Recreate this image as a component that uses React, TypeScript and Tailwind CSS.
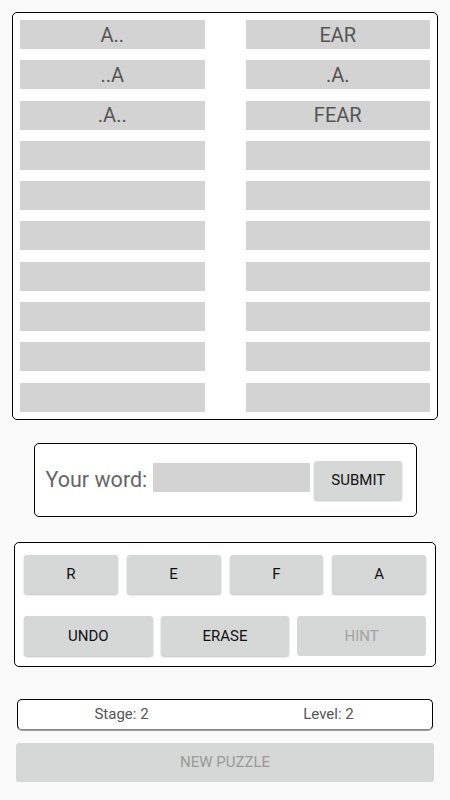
import React from "react";

const LEFT = ["A..", "..A", ".A..", "", "", "", "", "", "", ""];
const RIGHT = ["EAR", ".A.", "FEAR", "", "", "", "", "", "", ""];
const LETTERS = ["R", "E", "F", "A"];

const btn =
  "flex items-center justify-center rounded-[3px] bg-[#d6d7d7] text-[15px] font-normal text-[#111] shadow-[0_1px_2px_rgba(0,0,0,0.25)]";

export default function App() {
  return (
    <div
      className="flex h-[800px] w-full flex-col bg-[#fafafa] pt-[12px]"
      style={{ fontFamily: "Roboto, 'Noto Sans', sans-serif" }}
    >
      {/* found words */}
      <div className="mx-[12px] h-[408px] rounded-[5px] border border-black bg-white px-[7px] py-[7px]">
        <div className="grid grid-cols-2 gap-x-[41px] gap-y-[11.3px]">
          {LEFT.map((l, i) => (
            <React.Fragment key={i}>
              <div className="flex h-[29px] items-center justify-center bg-[#d3d3d3] text-[20px] text-[#555]">
                {l}
              </div>
              <div className="flex h-[29px] items-center justify-center bg-[#d3d3d3] text-[20px] text-[#555]">
                {RIGHT[i]}
              </div>
            </React.Fragment>
          ))}
        </div>
      </div>

      {/* word entry */}
      <div className="mx-auto mt-[23px] flex h-[74px] w-[383px] items-center rounded-[5px] border border-black bg-white pl-[11px] pr-[13px]">
        <span className="text-[21.5px] text-[#666]">Your word:</span>
        <div className="ml-[6px] mt-[-5px] h-[29px] w-[157px] bg-[#d3d3d3]" />
        <button className={`${btn} ml-[4px] h-[39px] w-[88px]`}>SUBMIT</button>
      </div>

      {/* keyboard */}
      <div className="mx-[14px] mt-[25px] flex h-[125px] flex-col rounded-[5px] border border-black bg-white px-[9px] pt-[12px]">
        <div className="grid grid-cols-4 gap-x-[9px]">
          {LETTERS.map((l) => (
            <button key={l} className={`${btn} h-[39px]`}>
              {l}
            </button>
          ))}
        </div>
        <div className="mt-[22px] grid grid-cols-3 gap-x-[8px]">
          <button className={`${btn} h-[40px]`}>UNDO</button>
          <button className={`${btn} h-[40px]`}>ERASE</button>
          <button className="flex h-[40px] items-center justify-center rounded-[3px] bg-[#d6d7d7] text-[15px] text-[#a3a3a3]">
            HINT
          </button>
        </div>
      </div>

      {/* stats */}
      <div className="mx-[17px] mt-[32px] flex h-[31px] items-center rounded-[5px] border border-black border-b-[#8c8c8c] bg-white shadow-[0_1px_0_#9a9a9a]">
        <span className="flex-1 text-center text-[15px] text-[#555]">Stage: 2</span>
        <span className="flex-1 text-center text-[15px] text-[#555]">Level: 2</span>
      </div>

      <button className="mx-[16px] mt-[13px] flex h-[39px] items-center justify-center rounded-[3px] bg-[#d6d7d7] text-[15px] text-[#9a9a9a]">
        NEW PUZZLE
      </button>
    </div>
  );
}
